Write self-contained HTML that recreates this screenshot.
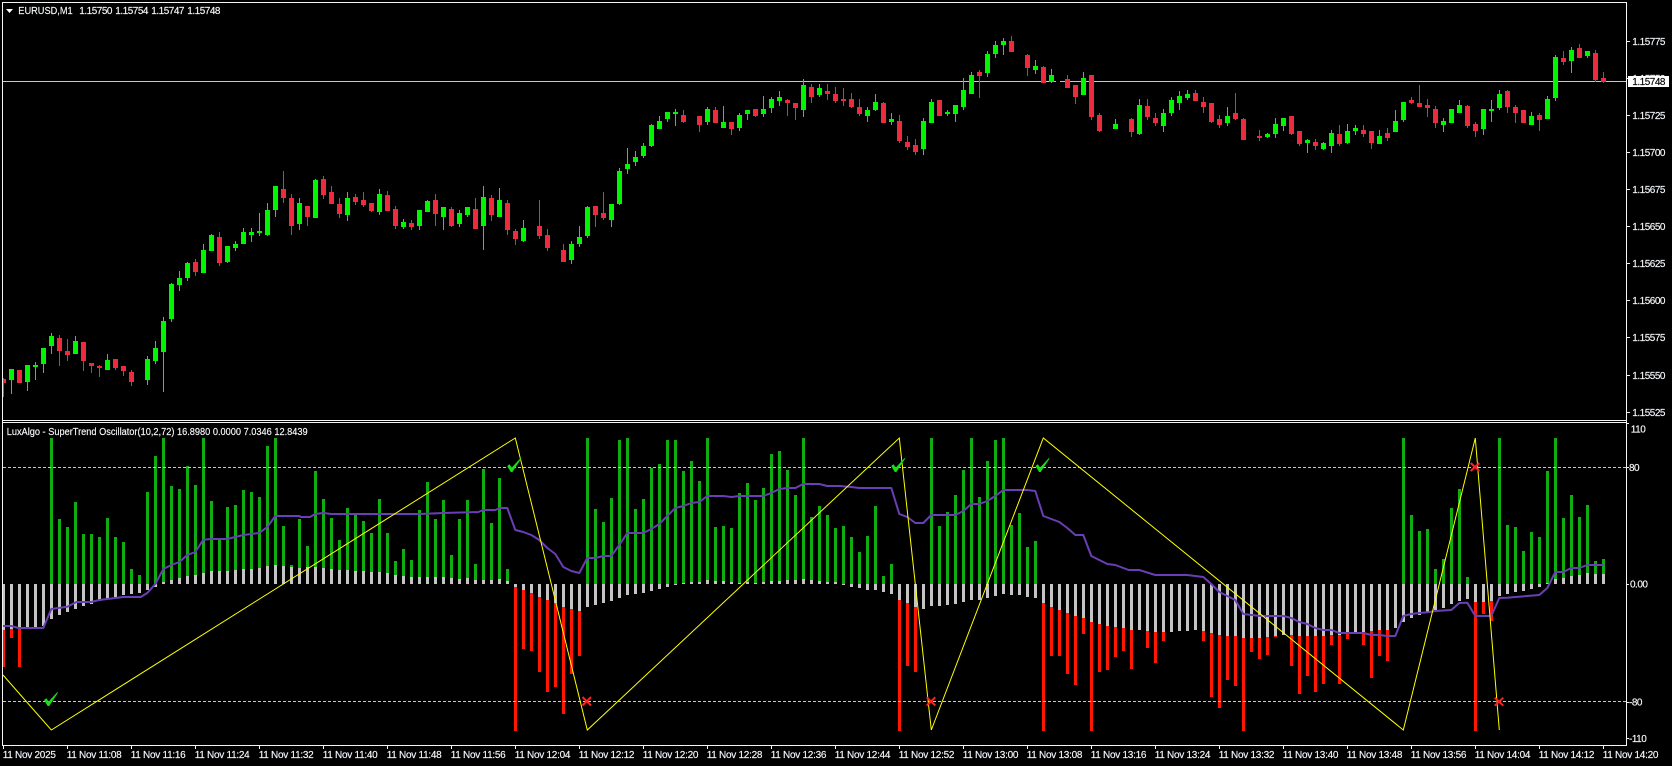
<!DOCTYPE html>
<html><head><meta charset="utf-8"><title>EURUSD,M1</title>
<style>
html,body{margin:0;padding:0;background:#000;width:1672px;height:766px;overflow:hidden}
svg{display:block}
text{font-family:"Liberation Sans",sans-serif;font-size:10px;fill:#f6f9fc;stroke:#f6f9fc;stroke-width:.15px}
.n text{letter-spacing:-.5px}
.x text{letter-spacing:-.27px}
</style></head><body>
<svg width="1672" height="766" viewBox="0 0 1672 766" xmlns="http://www.w3.org/2000/svg">
<rect width="1672" height="766" fill="#000"/>
<path d="M3 81.5H1056M1060 81.5H1626" stroke="#c8c8c8" fill="none"/>
<!-- candle wicks -->
<path fill="none" stroke="#00f500" d="M11.5 369V394M27.5 365V391M35.5 362V380M43.5 348V373M51.5 333V354M75.5 336V354M107.5 354V370M147.5 356V385M155.5 341V364M163.5 317V392M171.5 283V322M179.5 271V291M187.5 262V281M203.5 244V273M211.5 234V251M227.5 246V263M235.5 241V251M243.5 228V244M251.5 228V242M259.5 213V236M267.5 203V236M275.5 186V217M299.5 198V230M315.5 179V218M347.5 192V221M379.5 189V215M403.5 219V229M419.5 210V230M427.5 200V212M443.5 207V230M459.5 210V227M467.5 207V217M483.5 186V250M499.5 188V217M523.5 220V242M571.5 241V264M579.5 226V247M587.5 206V238M611.5 204V227M619.5 168V205M627.5 148V174M635.5 151V166M643.5 143V158M651.5 124V147M659.5 116V129M667.5 112V122M675.5 109V126M707.5 107V125M723.5 106V128M739.5 113V131M747.5 110V120M763.5 96V117M771.5 97V113M779.5 91V106M803.5 79V117M819.5 84V97M867.5 107V122M875.5 94V111M891.5 113V125M923.5 118V155M931.5 99V123M947.5 110V116M955.5 105V122M963.5 78V110M971.5 72V94M987.5 51V77M995.5 41V58M1003.5 38V55M1035.5 60V74M1051.5 69V83M1083.5 72V95M1115.5 119V129M1139.5 99V135M1163.5 109V132M1171.5 97V116M1179.5 91V110M1187.5 90V100M1227.5 107V126M1267.5 133V138M1275.5 118V138M1283.5 118V131M1307.5 139V153M1323.5 142V150M1331.5 130V153M1347.5 124V144M1355.5 125V135M1379.5 130V144M1395.5 110V132M1403.5 102V122M1443.5 118V132M1459.5 100V113M1483.5 109V135M1491.5 100V122M1499.5 90V110M1531.5 112V125M1547.5 96V119M1555.5 55V101M1571.5 47V73M1587.5 51V58"/>
<path fill="none" stroke="#ee2b3e" d="M3.5 378V397M59.5 335V366M67.5 339V361M83.5 342V371M91.5 363V373M99.5 365V377M115.5 359V370M123.5 366V376M131.5 370V386M195.5 259V276M219.5 232V266M283.5 171V203M291.5 194V235M307.5 206V226M323.5 176V199M331.5 186V204M339.5 198V218M355.5 194V205M363.5 192V207M371.5 203V212M387.5 191V211M395.5 206V229M411.5 220V230M435.5 194V226M451.5 207V227M475.5 198V229M491.5 195V221M507.5 200V235M515.5 229V245M539.5 200V239M547.5 229V251M563.5 244V262M595.5 206V227M603.5 192V220M683.5 110V123M699.5 116V132M715.5 107V123M731.5 122V135M755.5 109V117M787.5 99V116M795.5 103V120M811.5 84V103M827.5 84V100M835.5 87V103M843.5 88V106M851.5 93V108M859.5 99V116M883.5 102V123M899.5 115V143M907.5 136V150M915.5 139V155M979.5 70V98M1011.5 36V52M1027.5 54V76M1043.5 66V83M1067.5 75V88M1075.5 85V104M1091.5 75V120M1099.5 113V132M1131.5 118V137M1147.5 99V120M1155.5 113V126M1195.5 90V101M1203.5 97V113M1211.5 103V123M1219.5 115V128M1235.5 93V120M1243.5 118V140M1259.5 130V141M1291.5 116V135M1299.5 131V146M1315.5 139V150M1339.5 125V146M1363.5 125V137M1371.5 131V149M1387.5 128V141M1411.5 97V104M1419.5 85V107M1427.5 99V117M1435.5 106V128M1467.5 105V128M1475.5 122V137M1507.5 90V113M1515.5 105V123M1539.5 113V131M1563.5 51V65M1579.5 44V58M1595.5 50V82M1603.5 72V83"/>
<!-- candle bodies -->
<path fill="none" stroke="#00f500" stroke-width="5" d="M11.5 369V380M27.5 365V382M35.5 365V367M43.5 348V364M51.5 336V346M75.5 341V354M107.5 360V370M147.5 359V380M155.5 348V361M163.5 321V352M171.5 284V319M179.5 278V285M187.5 263V278M203.5 250V273M211.5 235V251M227.5 246V262M235.5 244V248M243.5 232V244M251.5 232V235M259.5 231V233M267.5 210V235M275.5 186V210M299.5 203V224M315.5 180V218M347.5 198V215M379.5 194V212M403.5 222V227M419.5 210V226M427.5 201V212M443.5 207V217M459.5 213V224M467.5 207V215M483.5 197V226M499.5 200V217M523.5 228V241M571.5 244V260M579.5 237V244M587.5 207V236M611.5 204V220M619.5 171V204M627.5 164V169M635.5 157V162M643.5 146V156M651.5 125V146M659.5 121V129M667.5 112V119M675.5 112V114M707.5 109V122M723.5 122V128M739.5 115V128M747.5 110V114M763.5 109V114M771.5 99V108M779.5 97V101M803.5 85V110M819.5 88V95M867.5 110V116M875.5 102V110M891.5 119V122M923.5 121V149M931.5 102V123M947.5 112V114M955.5 105V114M963.5 90V107M971.5 75V94M987.5 54V73M995.5 45V54M1003.5 41V45M1035.5 66V70M1051.5 75V82M1083.5 78V95M1115.5 124V129M1139.5 105V134M1163.5 113V126M1171.5 100V113M1179.5 96V103M1187.5 94V98M1227.5 116V123M1267.5 134V137M1275.5 124V134M1283.5 118V126M1307.5 140V143M1323.5 143V149M1331.5 133V146M1347.5 131V143M1355.5 128V131M1379.5 136V144M1395.5 121V132M1403.5 102V120M1443.5 121V125M1451.5 109V123M1459.5 105V113M1483.5 109V129M1491.5 109V111M1499.5 94V108M1531.5 116V125M1547.5 99V119M1555.5 57V98M1571.5 50V61M1587.5 51V56"/>
<path fill="none" stroke="#ee2b3e" stroke-width="5" d="M3.5 379V383M19.5 370V383M59.5 338V351M67.5 351V355M83.5 342V361M91.5 363V366M99.5 366V368M115.5 359V368M123.5 366V371M131.5 372V382M195.5 262V272M219.5 237V263M283.5 189V198M291.5 198V226M307.5 206V217M323.5 179V195M331.5 192V204M339.5 204V214M355.5 197V202M363.5 200V205M371.5 203V211M387.5 195V211M395.5 209V226M411.5 223V227M435.5 200V214M451.5 209V226M475.5 209V229M491.5 198V215M507.5 203V230M515.5 231V239M539.5 226V236M547.5 235V248M563.5 250V262M595.5 206V215M603.5 213V218M683.5 115V122M699.5 116V125M715.5 110V123M731.5 122V129M755.5 109V116M787.5 100V103M795.5 103V108M811.5 87V97M827.5 91V94M835.5 94V101M843.5 99V101M851.5 99V107M859.5 107V114M883.5 103V123M899.5 121V141M907.5 142V147M915.5 145V152M939.5 100V116M979.5 72V76M1011.5 41V52M1027.5 55V68M1043.5 67V83M1067.5 79V88M1075.5 85V97M1091.5 75V117M1099.5 115V131M1131.5 119V132M1147.5 106V117M1155.5 118V123M1195.5 93V101M1203.5 102V107M1211.5 103V122M1219.5 119V125M1235.5 113V119M1243.5 119V140M1259.5 136V138M1291.5 116V134M1299.5 131V144M1315.5 142V146M1339.5 134V144M1363.5 130V134M1371.5 131V143M1387.5 133V138M1411.5 100V103M1419.5 103V107M1427.5 105V108M1435.5 109V123M1467.5 106V126M1475.5 124V131M1507.5 91V107M1515.5 107V113M1523.5 110V123M1539.5 115V120M1563.5 58V62M1579.5 48V58M1595.5 53V80M1603.5 78V82"/>
<!-- oscillator: green bars -->
<path fill="none" stroke="#10ad10" stroke-width="3" d="M51.5 584V438M59.5 584V519M67.5 584V527M75.5 584V502M83.5 584V534M91.5 584V534M99.5 584V537M107.5 584V518M115.5 584V537M123.5 584V542M131.5 584V569M139.5 584V575M147.5 584V492M155.5 584V456M163.5 584V438M171.5 584V486M179.5 584V489M187.5 584V466M195.5 584V485M203.5 584V438M211.5 584V501M219.5 584V540M227.5 584V507M235.5 584V505M243.5 584V490M251.5 584V492M259.5 584V497M267.5 584V446M275.5 584V438M283.5 584V526M291.5 584V565M299.5 584V519M307.5 584V546M315.5 584V471M323.5 584V499M331.5 584V518M339.5 584V540M347.5 584V508M355.5 584V515M363.5 584V521M371.5 584V533M379.5 584V499M387.5 584V533M395.5 584V561M403.5 584V549M411.5 584V560M419.5 584V510M427.5 584V482M435.5 584V519M443.5 584V500M451.5 584V555M459.5 584V519M467.5 584V500M475.5 584V564M483.5 584V469M491.5 584V523M499.5 584V478M507.5 584V569M587.5 584V438M595.5 584V509M603.5 584V522M611.5 584V498M619.5 584V440M627.5 584V438M635.5 584V509M643.5 584V499M651.5 584V468M659.5 584V464M667.5 584V440M675.5 584V440M683.5 584V471M691.5 584V461M699.5 584V481M707.5 584V438M715.5 584V527M723.5 584V526M731.5 584V528M739.5 584V493M747.5 584V483M755.5 584V500M763.5 584V488M771.5 584V454M779.5 584V451M787.5 584V470M795.5 584V495M803.5 584V438M811.5 584V517M819.5 584V506M827.5 584V515M835.5 584V528M843.5 584V526M851.5 584V537M859.5 584V552M867.5 584V536M875.5 584V506M883.5 584V576M891.5 584V564M931.5 584V438M939.5 584V526M947.5 584V512M955.5 584V495M963.5 584V470M971.5 584V438M979.5 584V497M987.5 584V461M995.5 584V440M1003.5 584V438M1011.5 584V525M1019.5 584V513M1027.5 584V547M1035.5 584V541M1403.5 584V438M1411.5 584V515M1419.5 584V531M1427.5 584V529M1435.5 584V569M1443.5 584V559M1451.5 584V508M1459.5 584V489M1467.5 584V577M1499.5 584V438M1507.5 584V525M1515.5 584V527M1523.5 584V551M1531.5 584V532M1539.5 584V537M1547.5 584V471M1555.5 584V438M1563.5 584V518M1571.5 584V495M1579.5 584V517M1587.5 584V505M1595.5 584V561M1603.5 584V559"/>
<!-- red bars -->
<path fill="none" stroke="#ff1500" stroke-width="3" d="M3.5 584V667M11.5 584V638M19.5 584V667M515.5 584V731M523.5 584V649M531.5 584V651M539.5 584V672M547.5 584V692M555.5 584V687M563.5 584V714M571.5 584V674M579.5 584V656M899.5 584V731M907.5 584V666M915.5 584V672M1043.5 584V731M1051.5 584V656M1059.5 584V656M1067.5 584V674M1075.5 584V685M1083.5 584V634M1091.5 584V731M1099.5 584V672M1107.5 584V670M1115.5 584V657M1123.5 584V651M1131.5 584V669M1147.5 584V648M1155.5 584V663M1163.5 584V641M1203.5 584V641M1211.5 584V697M1219.5 584V708M1227.5 584V680M1235.5 584V686M1243.5 584V731M1251.5 584V652M1259.5 584V659M1267.5 584V655M1275.5 584V637M1291.5 584V666M1299.5 584V694M1307.5 584V676M1315.5 584V692M1323.5 584V684M1331.5 584V645M1339.5 584V684M1347.5 584V639M1363.5 584V645M1371.5 584V678M1379.5 584V656M1387.5 584V661M1475.5 584V731M1483.5 584V614M1491.5 584V621"/>
<!-- gray bars -->
<path fill="none" stroke="#c4c4c4" stroke-width="3" d="M3.5 584V630M11.5 584V629M19.5 584V629M27.5 584V628M35.5 584V628M43.5 584V626M51.5 584V619M59.5 584V615M67.5 584V612M75.5 584V609M83.5 584V606M91.5 584V604M99.5 584V601M107.5 584V599M115.5 584V597M123.5 584V595M131.5 584V594M139.5 584V593M147.5 584V590M155.5 584V587M163.5 584V582M171.5 584V580M179.5 584V578M187.5 584V576M195.5 584V575M203.5 584V573M211.5 584V571M219.5 584V571M227.5 584V571M235.5 584V570M243.5 584V569M251.5 584V569M259.5 584V568M267.5 584V566M275.5 584V565M283.5 584V566M291.5 584V567M299.5 584V568M307.5 584V567M315.5 584V567M323.5 584V568M331.5 584V569M339.5 584V570M347.5 584V570M355.5 584V571M363.5 584V571M371.5 584V572M379.5 584V572M387.5 584V573M395.5 584V575M403.5 584V576M411.5 584V577M419.5 584V577M427.5 584V577M435.5 584V577M443.5 584V577M451.5 584V578M459.5 584V579M467.5 584V578M475.5 584V580M483.5 584V580M491.5 584V580M499.5 584V579M507.5 584V581M515.5 584V587M523.5 584V590M531.5 584V593M539.5 584V597M547.5 584V600M555.5 584V603M563.5 584V607M571.5 584V609M579.5 584V611M587.5 584V607M595.5 584V605M603.5 584V603M611.5 584V601M619.5 584V598M627.5 584V595M635.5 584V594M643.5 584V593M651.5 584V591M659.5 584V589M667.5 584V587M675.5 584V585M683.5 584V583M691.5 584V582M699.5 584V582M707.5 584V580M715.5 584V581M723.5 584V581M731.5 584V582M739.5 584V583M747.5 584V582M755.5 584V583M763.5 584V582M771.5 584V581M779.5 584V581M787.5 584V580M795.5 584V580M803.5 584V579M811.5 584V580M819.5 584V581M827.5 584V582M835.5 584V582M843.5 584V585M851.5 584V587M859.5 584V588M867.5 584V590M875.5 584V590M883.5 584V592M891.5 584V594M899.5 584V600M907.5 584V603M915.5 584V607M923.5 584V609M931.5 584V606M939.5 584V606M947.5 584V605M955.5 584V604M963.5 584V602M971.5 584V600M979.5 584V600M987.5 584V598M995.5 584V596M1003.5 584V594M1011.5 584V595M1019.5 584V595M1027.5 584V597M1035.5 584V598M1043.5 584V603M1051.5 584V607M1059.5 584V610M1067.5 584V613M1075.5 584V616M1083.5 584V618M1091.5 584V622M1099.5 584V624M1107.5 584V626M1115.5 584V627M1123.5 584V628M1131.5 584V630M1139.5 584V630M1147.5 584V631M1155.5 584V632M1163.5 584V632M1171.5 584V632M1179.5 584V631M1187.5 584V631M1195.5 584V630M1203.5 584V631M1211.5 584V633M1219.5 584V635M1227.5 584V636M1235.5 584V636M1243.5 584V638M1251.5 584V638M1259.5 584V638M1267.5 584V637M1275.5 584V636M1283.5 584V635M1291.5 584V635M1299.5 584V636M1307.5 584V636M1315.5 584V636M1323.5 584V636M1331.5 584V635M1339.5 584V635M1347.5 584V634M1355.5 584V633M1363.5 584V632M1371.5 584V631M1379.5 584V630M1387.5 584V630M1395.5 584V628M1403.5 584V622M1411.5 584V618M1419.5 584V615M1427.5 584V612M1435.5 584V610M1443.5 584V608M1451.5 584V604M1459.5 584V601M1467.5 584V599M1475.5 584V602M1483.5 584V602M1491.5 584V601M1499.5 584V596M1507.5 584V594M1515.5 584V592M1523.5 584V591M1531.5 584V589M1539.5 584V587M1547.5 584V583M1555.5 584V579M1563.5 584V578M1571.5 584V576M1579.5 584V575M1587.5 584V573M1595.5 584V574M1603.5 584V574"/>
<!-- dashed levels -->
<path d="M3 467.5H1626M3 701.5H1626" stroke="#c8c8c8" stroke-dasharray="3 2" fill="none"/>
<!-- signal line -->
<polyline fill="none" stroke="#6a3eb5" stroke-width="2" stroke-linejoin="round" points="3,626 11.3,626 18.3,628 43.3,628 51.3,609 67.3,606.7 76.3,602 91.3,602 99.3,600 107.3,599 123.3,597 140.7,597 147.3,593 155.3,584 163.3,569 171.3,565 179.3,562 187.3,555 195.3,552 203.3,539.7 211.3,539 227.3,539 235.3,537 243.3,535 259.3,533 267.3,527 275.3,516 299.3,516 300.7,517 310,517 315.3,514 323.3,513 331.3,514 420,514 443.3,513 478.3,512 483.3,510 495.3,510 500,508 507.3,508 515.3,530 523.3,532 531.3,535 539.3,540 547.3,548 555.3,554 563.3,567 571.3,571 579.3,573 587.3,558 595.3,558 603.3,556 611.3,556 619.3,545 627.3,533 643.3,533 651.3,529 659.3,524 667.3,516 675.3,508 683.3,506 691.3,503 699.3,502 707.3,496 723.3,496 731.3,497 739.3,496 763.3,496 771.3,493 779.3,489 787.3,488 795.3,488 803.3,484 819.3,484 827.3,486 840,486 851.3,487 859.3,488 891.3,488 899.3,514 907.3,517 915.3,523 923.3,523 931.3,515 955.3,515 963.3,511 971.3,504 979.3,504 987.3,501 995.3,496 1003.3,490 1027.3,490 1035.3,491 1043.3,516 1059.3,522 1067.3,528 1075.3,535 1083.3,535 1091.3,556 1099.3,560 1107.3,564 1115.3,565 1128.7,570 1139.3,570 1155.3,575 1187.3,575 1203.3,577 1211.3,584 1219.3,592 1227.3,596 1235.3,600 1243.3,614 1260,616 1283.3,616 1291.3,618 1299.3,622 1307.3,624 1315.3,628 1323.3,630 1331.3,630 1339.3,633 1363.3,633 1371.3,635 1379.3,635 1387.3,636 1395.3,636 1403.3,616 1411.3,614 1419.3,613 1427.3,612.3 1435.3,611 1451.3,610 1459.3,603 1467.3,602.7 1475.3,616 1491.3,616 1499.3,598 1507.3,597.7 1515.3,597 1539.3,595 1547.3,588 1555.3,572 1563.3,572 1571.3,568 1579.3,568 1587.3,565 1603.3,565"/>
<!-- zigzag -->
<polyline fill="none" stroke="#ffff00" stroke-width="1" points="3,675 51.3,730 515.3,438 587.3,730 899.3,438 931.3,730 1043.3,438 1403.3,730 1475.3,438 1499.3,730"/>
<!-- check marks -->
<g fill="#14e014">
<path d="M44 700L46.3 698.3L48.6 701.5L57.4 692L58 692.6L49.2 706H47.6Z"/>
<path transform="translate(463.2 -234)" d="M44 700L46.3 698.3L48.6 701.5L57.4 692L58 692.6L49.2 706H47.6Z"/>
<path transform="translate(847.2 -234)" d="M44 700L46.3 698.3L48.6 701.5L57.4 692L58 692.6L49.2 706H47.6Z"/>
<path transform="translate(991.5 -234)" d="M44 700L46.3 698.3L48.6 701.5L57.4 692L58 692.6L49.2 706H47.6Z"/>
</g>
<!-- x marks -->
<g fill="none" stroke="#ff2020" stroke-width="2">
<path d="M582.5 697L591 705.5M591 697L582.5 705.5"/>
<path d="M926.7 697.3L935.3 705.5M935.3 697.3L926.7 705.5"/>
<path d="M1470.7 463L1479.3 471M1479.3 463L1470.7 471"/>
<path d="M1494.7 697.7L1503.3 705.7M1503.3 697.7L1494.7 705.7"/>
</g>
<!-- frame -->
<rect x="0" y="0" width="2" height="766" fill="#000"/>
<g fill="none" stroke="#f4f4f4">
<path d="M2.5 2.5H1626.5V745.5H2.5Z"/>
<path d="M2.5 420.5H1626.5M2.5 422.5H1626.5"/>
<!-- y ticks -->
<path d="M1627 41.5h3M1627 78.5h3M1627 115.5h3M1627 152.5h3M1627 189.5h3M1627 226.5h3M1627 263.5h3M1627 300.5h3M1627 337.5h3M1627 375.5h3M1627 412.5h3M1627 423.5h2M1627 467.5h2M1627 584.5h2M1627 702.5h2M1627 738.5h2"/>
<!-- x ticks -->
<path d="M3.5 746v3M67.5 746v3M131.5 746v3M195.5 746v3M259.5 746v3M323.5 746v3M387.5 746v3M451.5 746v3M515.5 746v3M579.5 746v3M643.5 746v3M707.5 746v3M771.5 746v3M835.5 746v3M899.5 746v3M963.5 746v3M1027.5 746v3M1091.5 746v3M1155.5 746v3M1219.5 746v3M1283.5 746v3M1347.5 746v3M1411.5 746v3M1475.5 746v3M1539.5 746v3M1603.5 746v3"/>
</g>
<!-- header -->
<polygon points="6,9 13,9 9.5,13" fill="#fff"/>
<text x="18.3" y="14" textLength="54.4" lengthAdjust="spacingAndGlyphs">EURUSD,M1</text>
<g class="n">
<text x="79.3" y="14">1.15750</text>
<text x="115.3" y="14">1.15754</text>
<text x="151.3" y="14">1.15747</text>
<text x="187.3" y="14">1.15748</text>
<text x="1632.3" y="45">1.15775</text>
<text x="1632.3" y="82">1.15750</text>
<text x="1632.3" y="119">1.15725</text>
<text x="1632.3" y="156">1.15700</text>
<text x="1632.3" y="193">1.15675</text>
<text x="1632.3" y="230">1.15650</text>
<text x="1632.3" y="267">1.15625</text>
<text x="1632.3" y="304">1.15600</text>
<text x="1632.3" y="341">1.15575</text>
<text x="1632.3" y="379">1.15550</text>
<text x="1632.3" y="416">1.15525</text>
</g>
<rect x="1628" y="76" width="41" height="11" fill="#fff"/>
<text x="1632.3" y="85" style="fill:#000;stroke:#000;letter-spacing:-.5px">1.15748</text>
<text x="6.7" y="435" textLength="301" lengthAdjust="spacingAndGlyphs">LuxAlgo - SuperTrend Oscillator(10,2,72) 16.8980 0.0000 7.0346 12.8439</text>
<g class="n">
<text x="1630.7" y="432.5" style="letter-spacing:-.4px">110</text>
<text x="1629" y="471">80</text>
<text x="1630" y="587.5">0.00</text>
<text x="1629" y="705.5">-80</text>
<text x="1629" y="742">-110</text>
</g>
<g class="x">
<text x="2.7" y="758">11 Nov 2025</text>
<text x="66.7" y="758">11 Nov 11:08</text>
<text x="130.7" y="758">11 Nov 11:16</text>
<text x="194.7" y="758">11 Nov 11:24</text>
<text x="258.7" y="758">11 Nov 11:32</text>
<text x="322.7" y="758">11 Nov 11:40</text>
<text x="386.7" y="758">11 Nov 11:48</text>
<text x="450.7" y="758">11 Nov 11:56</text>
<text x="514.7" y="758">11 Nov 12:04</text>
<text x="578.7" y="758">11 Nov 12:12</text>
<text x="642.7" y="758">11 Nov 12:20</text>
<text x="706.7" y="758">11 Nov 12:28</text>
<text x="770.7" y="758">11 Nov 12:36</text>
<text x="834.7" y="758">11 Nov 12:44</text>
<text x="898.7" y="758">11 Nov 12:52</text>
<text x="962.7" y="758">11 Nov 13:00</text>
<text x="1026.7" y="758">11 Nov 13:08</text>
<text x="1090.7" y="758">11 Nov 13:16</text>
<text x="1154.7" y="758">11 Nov 13:24</text>
<text x="1218.7" y="758">11 Nov 13:32</text>
<text x="1282.7" y="758">11 Nov 13:40</text>
<text x="1346.7" y="758">11 Nov 13:48</text>
<text x="1410.7" y="758">11 Nov 13:56</text>
<text x="1474.7" y="758">11 Nov 14:04</text>
<text x="1538.7" y="758">11 Nov 14:12</text>
<text x="1602.7" y="758">11 Nov 14:20</text>
</g>
</svg>
</body></html>
